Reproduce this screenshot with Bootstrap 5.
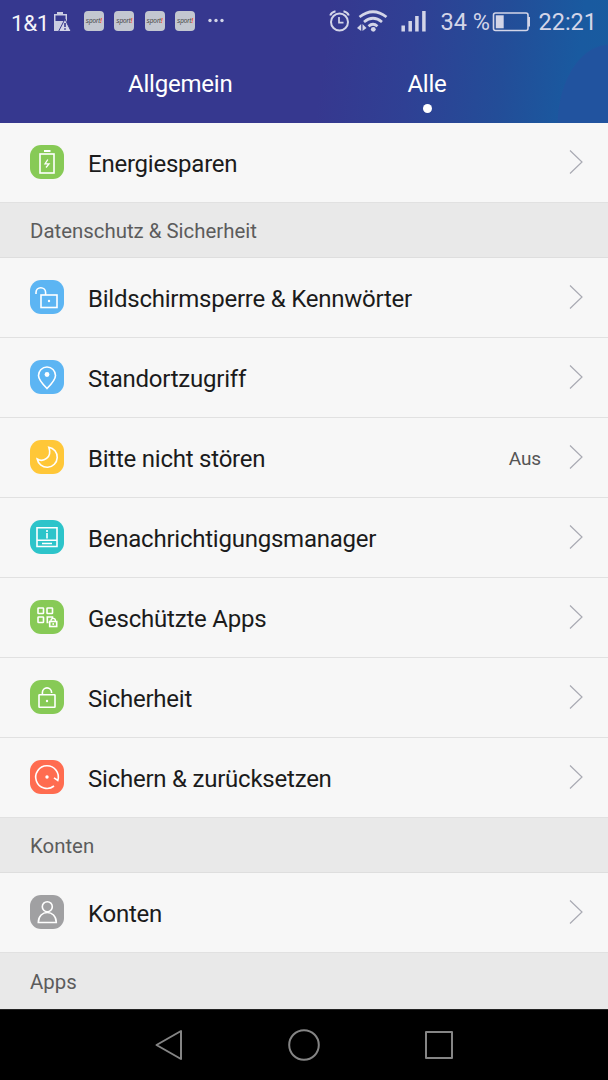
<!DOCTYPE html>
<html lang="de">
<head>
<meta charset="utf-8">
<meta name="viewport" content="width=device-width, initial-scale=1">
<title>Einstellungen</title>
<link href="https://cdn.jsdelivr.net/npm/bootstrap@5.3.0/dist/css/bootstrap.min.css" rel="stylesheet">
<style>
body{font-family:Roboto,"Liberation Sans",sans-serif;background:#f7f7f7;height:1080px;overflow:hidden;color:#1b1b1b}
svg{display:block;flex:none;overflow:visible}
.top{height:123px;background:radial-gradient(ellipse 52px 82px at 609px 126px,#21539f 0 98%,transparent 100%),linear-gradient(97deg,#36388f 0,#36388f 53%,#2f4094 67%,#234d98 82%,#195aa0 94%,#195b9f 100%)}
.status{height:44px;padding-left:11px;color:#d3d5e8;font-size:23.5px;line-height:44px;white-space:nowrap}
.carrier{color:#f4f4fa;font-size:22.5px;letter-spacing:-.5px;width:43px;padding-top:1px}
.notices{margin:0 0 2px -1px}
.app{width:20px;height:20px;border-radius:4px;background:#c3c7d0;color:#444;font:italic 6.4px/19px "Liberation Sans",sans-serif;text-align:center;margin-right:10.4px}
.app b{color:#ff4028}
.tabs{height:79px;font-size:24px;letter-spacing:-.22px;line-height:80px;color:#fff}
.dot{width:9px;height:9px;left:422.5px;top:103.5px}
.entry{height:80px;padding:0 25px 2px 30px;border-bottom:1px solid #e1e1e1;font-size:24px;letter-spacing:-.23px}
.entry .title{margin-left:24px;padding-top:4px}
.state{font-size:19px;letter-spacing:-.1px;color:#555;margin-right:28px;padding-top:5px}
.group{height:55px;padding:2px 30px 0;background:#e9e9e9;border-bottom:1px solid #dedede;font-size:20.4px;color:#5c5c5c}
.group.end{height:56px;padding-top:3px;border-bottom-color:#e9e9e9}
.tile{width:34px;height:34px;border-radius:11px}
.tile svg,.glyph{fill:none;stroke:#fff;stroke-width:1.6}
.green{background:#87ca56}.blue{background:#5cb5f3}.yellow{background:#ffc738}.teal{background:#2dc4ca}.red{background:#ff6c50}.grey{background:#a0a0a2}
.softkeys{height:71px;background:#000;border-top:1px solid #242424}
</style>
</head>
<body>
<header class="top position-relative">
<div class="status d-flex align-items-center">
<span class="carrier">1&amp;1</span>
<div class="notices d-flex align-items-center">
<svg width="18" height="21" viewBox="0 0 18 21"><path d="M1 3H4V1H10V3H14V20H1Z" fill="#cbcde2"/><path d="M2.500 4.500H12.500V10H2.500Z" fill="#37398f"/><path d="M12 8L18.200 20.500H5.500Z" fill="#d3d5e8" stroke="#37398f" stroke-width="1"/><path d="M12 12V16M12 17.300V18.800" stroke="#37398f" stroke-width="1.600"/></svg>
<div class="d-flex" style="margin-left:13px">
<span class="app">sport<b>!</b></span><span class="app">sport<b>!</b></span><span class="app">sport<b>!</b></span><span class="app">sport<b>!</b></span>
</div>
<svg width="18" height="4" style="margin-left:2px" fill="#d3d5e8"><circle cx="2" cy="1.500" r="1.700"/><circle cx="8" cy="1.500" r="1.700"/><circle cx="14" cy="1.500" r="1.700"/></svg>
</div>
<div class="d-flex align-items-center ms-auto" style="padding-right:11px">
<svg width="112" height="24" viewBox="328 10 112 24" fill="none" stroke="#d3d5e8"><circle cx="339.500" cy="22" r="8.500" stroke-width="2"/><path d="M339 17V22.700H343.500" stroke-width="1.700"/><path d="M330.200 15.500Q331.500 12 335.500 11.200M343.500 11.200Q347.500 12 348.800 15.500" stroke-width="2"/><path d="M359.500 17Q373 6.500 386.500 17M364 22Q373 14.500 382 22M368.500 26.200Q373 22.300 377.500 26.200" stroke-width="2.700"/><circle cx="373.300" cy="29.300" r="2.400" fill="#d3d5e8" stroke="none"/><path d="M357 28L361.200 24V31ZM362.500 24V31L366.500 28Z" fill="#d3d5e8" stroke="none"/><path d="M403.200 25.500V31.500M410.200 21V31.500M416.900 16V31.500M423.900 11V31.500" stroke-width="3.500"/></svg>
<span style="width:52px">34 %</span>
<svg width="40" height="20" viewBox="0 0 40 20"><rect x="1.500" y="1" width="34.500" height="17.500" rx="2" fill="none" stroke="#d3d5e8" stroke-width="1.600"/><path d="M3.800 3.300H11.700V16.300H3.800Z" fill="#d3d5e8"/><path d="M37 5V14.500" stroke="#d3d5e8" stroke-width="2"/></svg>
<span style="margin-left:6px">22:21</span>
</div>
</div>
<nav class="tabs d-flex position-relative" style="padding-left:128px"><span>Allgemein</span><span style="margin-left:175px">Alle</span></nav>
<span class="dot bg-white rounded-circle position-absolute"></span>
</header>
<main>
<div class="entry d-flex align-items-center"><span class="tile green"><svg width="34" height="34"><rect x="10" y="9" width="14" height="19"/><path d="M14 6H20.500" stroke-width="2"/><path d="M17.800 14.500L15 18.800H19L16 22.500" stroke-width="1.300"/></svg></span><span class="title">Energiesparen</span><svg class="ms-auto glyph" width="14" height="24"><use href="#next"/></svg></div>
<div class="group d-flex align-items-center">Datenschutz &amp; Sicherheit</div>
<div class="entry d-flex align-items-center"><span class="tile blue"><svg width="34" height="34"><rect x="11" y="15" width="16" height="12.500"/><path d="M6 14V12.500A4.800 4.800 0 0 1 15.600 12.500V15"/><circle cx="19" cy="21" r="1.200" fill="#fff" stroke="none"/></svg></span><span class="title">Bildschirmsperre &amp; Kennwörter</span><svg class="ms-auto glyph" width="14" height="24"><use href="#next"/></svg></div>
<div class="entry d-flex align-items-center"><span class="tile blue"><svg width="34" height="34"><path d="M17 28.500Q8.500 20 8.500 15.500A8.500 8.500 0 0 1 25.500 15.500Q25.500 20 17 28.500Z"/><circle cx="17" cy="14.500" r="2.400" fill="#fff" stroke="none"/></svg></span><span class="title">Standortzugriff</span><svg class="ms-auto glyph" width="14" height="24"><use href="#next"/></svg></div>
<div class="entry d-flex align-items-center"><span class="tile yellow"><svg width="34" height="34"><path d="M18.800 7.200A10.100 10.100 0 1 1 7.200 19C13 22.500 22.500 18 18.800 7.200Z"/></svg></span><span class="title">Bitte nicht stören</span><span class="state ms-auto">Aus</span><svg class="glyph" width="14" height="24"><use href="#next"/></svg></div>
<div class="entry d-flex align-items-center"><span class="tile teal"><svg width="34" height="34"><path d="M7 7.800H27V26.500H7ZM7 20.300H27M12 23.500H22M17 10V12M17 13V18.500"/></svg></span><span class="title">Benachrichtigungsmanager</span><svg class="ms-auto glyph" width="14" height="24"><use href="#next"/></svg></div>
<div class="entry d-flex align-items-center"><span class="tile green"><svg width="34" height="34"><rect x="8" y="8" width="5.500" height="5.500" rx=".6"/><rect x="17" y="8" width="5.500" height="5.500" rx=".6"/><rect x="8" y="17" width="5.500" height="5.500" rx=".6"/><path d="M18.500 22.500H17.300V17H22.500V18"/><rect x="19.700" y="21.500" width="7" height="5"/><path d="M21 21.500V20.500A2.200 2.200 0 0 1 25.400 20.500V21.500M23.200 23V25" stroke-width="1.300"/></svg></span><span class="title">Geschützte Apps</span><svg class="ms-auto glyph" width="14" height="24"><use href="#next"/></svg></div>
<div class="entry d-flex align-items-center"><span class="tile green"><svg width="34" height="34"><rect x="9" y="14.700" width="16" height="12.500" rx=".5"/><path d="M12.400 14.500V12.500A4.600 4.600 0 0 1 21.600 12.500V13"/><circle cx="17" cy="21" r="1.200" fill="#fff" stroke="none"/></svg></span><span class="title">Sicherheit</span><svg class="ms-auto glyph" width="14" height="24"><use href="#next"/></svg></div>
<div class="entry d-flex align-items-center"><span class="tile red"><svg width="34" height="34"><path d="M24 26A11.300 11.300 0 1 1 27.800 20.500L24 17.800"/><circle cx="17" cy="17" r="1.700" fill="#fff" stroke="none"/></svg></span><span class="title">Sichern &amp; zurücksetzen</span><svg class="ms-auto glyph" width="14" height="24"><use href="#next"/></svg></div>
<div class="group d-flex align-items-center">Konten</div>
<div class="entry d-flex align-items-center"><span class="tile grey"><svg width="34" height="34"><circle cx="17.300" cy="11.700" r="5"/><path d="M8.300 27.500C8.300 14.200 26.300 14.200 26.300 27.500Z"/></svg></span><span class="title">Konten</span><svg class="ms-auto glyph" width="14" height="24"><use href="#next"/></svg></div>
<div class="group end d-flex align-items-center">Apps</div>
</main>
<footer class="softkeys d-flex align-items-center" style="padding-left:155px">
<svg width="298" height="32" viewBox="155 1029 298 32" fill="none" stroke="#858585" stroke-width="2" stroke-linejoin="round"><path d="M181 1031V1059L156.500 1045Z"/><circle cx="304" cy="1045" r="14.800"/><rect x="426" y="1032" width="26" height="26"/></svg>
</footer>
<svg width="0" height="0" class="position-absolute"><defs><path id="next" d="M1 .5L13 12L1 23.500" stroke="#a9aab3" stroke-width="1.200"/></defs></svg>
<script src="https://cdn.jsdelivr.net/npm/bootstrap@5.3.0/dist/js/bootstrap.bundle.min.js"></script>
</body>
</html>
